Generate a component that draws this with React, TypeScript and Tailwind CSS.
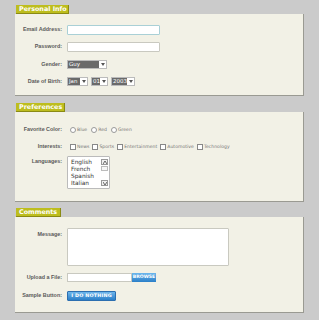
import React from "react";

const labelCls =
  "w-[47px] shrink-0 text-right text-[5.4px] font-bold text-[#5a5a5a] leading-none whitespace-nowrap";

const LAB = { fontFamily: '"Liberation Sans", Arial, sans-serif' };

function Tab({ title, w }: { title: string; w: string }) {
  return (
    <div
      className={`h-[9px] ${w} ml-[16px] bg-[#bdbd1e] border-r border-b border-[#8a8a14] flex items-center pl-[3px] text-white font-bold text-[6.4px] leading-none whitespace-nowrap`}
      style={{ fontFamily: '"DejaVu Sans", Verdana, sans-serif' }}
    >
      {title}
    </div>
  );
}

function Panel({ children, className }: { children: React.ReactNode; className: string }) {
  return (
    <div className={`ml-[15px] w-[289px] bg-[#f2f1e6] border-r border-b border-[#9a9a92] ${className}`}>
      {children}
    </div>
  );
}

function Row({ label, children, className = "" }: { label: string; children?: React.ReactNode; className?: string }) {
  return (
    <div className={`flex items-center gap-[5px] ${className}`}>
      <div className={labelCls} style={LAB}>{label}</div>
      {children}
    </div>
  );
}

function Sel({ text, w }: { text: string; w: string }) {
  return (
    <div className={`flex h-[9px] ${w} border border-[#bbb] bg-white`}>
      <div className="flex-1 bg-[#6a6a6a] text-white text-[5.5px] leading-none flex items-center pl-[1px]">{text}</div>
      <div className="w-[7px] flex items-center justify-center">
        <svg width="4" height="3" viewBox="0 0 4 3">
          <path d="M0 0 L4 0 L2 3 Z" fill="#555" />
        </svg>
      </div>
    </div>
  );
}

function Radio({ label }: { label: string }) {
  return (
    <div className="flex items-center gap-[1px]">
      <div className="w-[6px] h-[6px] rounded-full border border-[#999] bg-white" />
      <span className="text-[4.6px] text-[#777] leading-none">{label}</span>
    </div>
  );
}

function Check({ label }: { label: string }) {
  return (
    <div className="flex items-center gap-[1px]">
      <div className="w-[6px] h-[6px] border border-[#888] bg-white" />
      <span className="text-[4.6px] text-[#777] leading-none">{label}</span>
    </div>
  );
}

export default function App() {
  return (
    <div
      className="w-[319px] h-[320px] bg-[#cbcbcb] pt-[5px] overflow-hidden"
      style={{ fontFamily: '"DejaVu Sans", Verdana, sans-serif' }}
    >
      <Tab title="Personal Info" w="w-[53px]" />
      <Panel className="h-[82px] pt-[11px] flex flex-col gap-[7px]">
        <Row label="Email Address:">
          <div className="w-[93px] h-[10px] border border-[#a9d0d6] rounded-[1px] bg-white" />
        </Row>
        <Row label="Password:">
          <div className="w-[93px] h-[10px] border border-[#c9c9c0] rounded-[1px] bg-white" />
        </Row>
        <Row label="Gender:" className="mt-[1px]">
          <Sel text="Guy" w="w-[40px]" />
        </Row>
        <Row label="Date of Birth:" className="mt-[1px]">
          <div className="flex gap-[3px]">
            <Sel text="Jan" w="w-[21px]" />
            <Sel text="01" w="w-[17px]" />
            <Sel text="2003" w="w-[24px]" />
          </div>
        </Row>
      </Panel>

      <div className="h-[7px]" />
      <Tab title="Preferences" w="w-[49px]" />
      <Panel className="h-[90px] pt-[15px] flex flex-col">
        <Row label="Favorite Color:">
          <div className="flex gap-[4px] ml-[3px]">
            <Radio label="Blue" />
            <Radio label="Red" />
            <Radio label="Green" />
          </div>
        </Row>
        <Row label="Interests:" className="mt-[11px]">
          <div className="flex gap-[3px] ml-[3px]">
            <Check label="News" />
            <Check label="Sports" />
            <Check label="Entertainment" />
            <Check label="Automotive" />
            <Check label="Technology" />
          </div>
        </Row>
        <div className="flex items-start gap-[5px] mt-[6px]">
          <div className={`${labelCls} pt-[3px]`} style={LAB}>Languages:</div>
          <div className="w-[43px] h-[33px] border border-[#bbb] rounded-[1px] bg-white flex">
            <div className="flex-1 pl-[3px] pt-[2px] text-[5.8px] leading-[7px] text-[#333]">
              <div>English</div>
              <div>French</div>
              <div>Spanish</div>
              <div>Italian</div>
            </div>
            <div className="w-[8px] flex flex-col py-[2px] pr-[1px]">
              <div className="h-[6px] border border-[#999] bg-[#f0f0f0] flex items-center justify-center">
                <svg width="4" height="3" viewBox="0 0 4 3"><path d="M0 3 L2 0 L4 3" stroke="#444" fill="none" strokeWidth="0.8" /></svg>
              </div>
              <div className="h-[5px] mt-[1px] border border-[#bbb] bg-[#f7f7f7]" />
              <div className="flex-1" />
              <div className="h-[6px] border border-[#999] bg-[#f0f0f0] flex items-center justify-center">
                <svg width="4" height="3" viewBox="0 0 4 3"><path d="M0 0 L2 3 L4 0" stroke="#444" fill="none" strokeWidth="0.8" /></svg>
              </div>
            </div>
          </div>
        </div>
      </Panel>

      <div className="h-[6px]" />
      <Tab title="Comments" w="w-[45px]" />
      <Panel className="h-[96px] pt-[11px] flex flex-col">
        <div className="flex items-start gap-[5px]">
          <div className={`${labelCls} pt-[4px]`} style={LAB}>Message:</div>
          <div className="w-[162px] h-[38px] border border-[#c9c9c0] rounded-[1px] bg-white" />
        </div>
        <Row label="Upload a File:" className="mt-[7px]">
          <div className="flex">
            <div className="w-[65px] h-[9px] border border-[#c9c9c0] bg-white" />
            <div className="w-[24px] h-[9px] bg-gradient-to-b from-[#6cb6ec] to-[#2a7fc8] text-white font-bold text-[4.6px] leading-none flex items-center justify-center">BROWSE</div>
          </div>
        </Row>
        <Row label="Sample Button:" className="mt-[9px]">
          <div className="w-[49px] h-[10px] rounded-[1px] bg-gradient-to-b from-[#6cb6ec] to-[#2a7fc8] border border-[#2c6fb0] text-white font-bold text-[4.8px] leading-none flex items-center justify-center tracking-[0.2px]">
            I DO NOTHING
          </div>
        </Row>
      </Panel>
    </div>
  );
}
